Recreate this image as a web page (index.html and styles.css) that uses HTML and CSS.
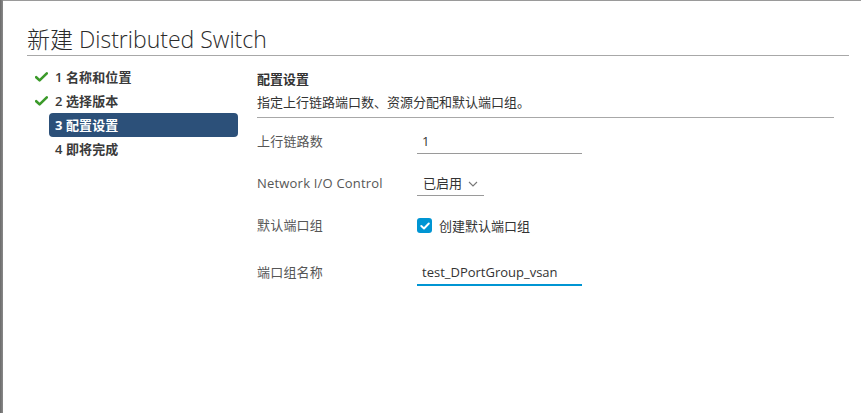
FILE: index.html
```html
<!DOCTYPE html>
<html lang="zh-CN">
<head>
<meta charset="utf-8">
<title>新建 Distributed Switch</title>
<link rel="stylesheet" href="styles.css">
</head>
<body>
<div class="page">
  <div class="backdrop-strip"></div>
  <div class="modal">
    <header class="modal-header">
      <h1 class="modal-title">新建 Distributed Switch</h1>
    </header>
    <div class="modal-body">
      <nav class="steps">
        <div class="step done">
          <span class="step-icon">
            <svg width="13" height="10" viewBox="0 0 13 10"><path d="M1.2 5.2 L4.6 8.4 L11.8 1.4" fill="none" stroke="#3b9a2a" stroke-width="2.6" stroke-linecap="round" stroke-linejoin="round"/></svg>
          </span>
          <span class="step-label">1 名称和位置</span>
        </div>
        <div class="step done">
          <span class="step-icon">
            <svg width="13" height="10" viewBox="0 0 13 10"><path d="M1.2 5.2 L4.6 8.4 L11.8 1.4" fill="none" stroke="#3b9a2a" stroke-width="2.6" stroke-linecap="round" stroke-linejoin="round"/></svg>
          </span>
          <span class="step-label">2 选择版本</span>
        </div>
        <div class="step active">
          <span class="step-icon"></span>
          <span class="step-label">3 配置设置</span>
        </div>
        <div class="step">
          <span class="step-icon"></span>
          <span class="step-label">4 即将完成</span>
        </div>
      </nav>
      <section class="content">
        <div class="content-head">
          <h2 class="content-title">配置设置</h2>
          <p class="content-desc">指定上行链路端口数、资源分配和默认端口组。</p>
        </div>
        <div class="form">
          <div class="form-row">
            <span class="form-label">上行链路数</span>
            <div class="field input">1</div>
          </div>
          <div class="form-row">
            <span class="form-label">Network I/O Control</span>
            <div class="field select">
              <span>已启用</span>
              <svg class="chevron" width="10" height="6" viewBox="0 0 10 6"><path d="M1 1 L5 5 L9 1" fill="none" stroke="#777" stroke-width="1.1"/></svg>
            </div>
          </div>
          <div class="form-row">
            <span class="form-label">默认端口组</span>
            <div class="field checkbox-field">
              <span class="checkbox">
                <svg width="10" height="8" viewBox="0 0 10 8"><path d="M1.3 4 L4 6.5 L8.8 1.5" fill="none" stroke="#fff" stroke-width="1.9" stroke-linecap="round" stroke-linejoin="round"/></svg>
              </span>
              <span class="checkbox-label">创建默认端口组</span>
            </div>
          </div>
          <div class="form-row last">
            <span class="form-label">端口组名称</span>
            <div class="field input focused">test_DPortGroup_vsan</div>
          </div>
        </div>
      </section>
    </div>
  </div>
</div>
</body>
</html>
```

FILE: styles.css
```css
* { box-sizing: border-box; }

html, body {
  margin: 0;
  padding: 0;
  background: #ffffff;
}

body {
  font-family: "Open Sans", "Noto Sans CJK SC", sans-serif;
  font-size: 13px;
  color: #333333;
}

.page {
  display: flex;
  width: 861px;
  height: 413px;
  overflow: hidden;
}

.backdrop-strip {
  width: 3px;
  flex: none;
  background: linear-gradient(to right, #6b6b6b, #8a8a8a);
}

.modal {
  flex: 1;
  background: #ffffff;
  border-top: 1px solid #9a9a9a;
  padding: 0 12px 0 24px;
  display: flex;
  flex-direction: column;
}

.modal-header {
  border-bottom: 1px solid #a8a8a8;
  height: 55px;
  padding-top: 25px;
}

.modal-title {
  margin: 0;
  font-family: "Open Sans", "Noto Sans CJK SC", sans-serif;
  font-weight: 300;
  font-size: 23px;
  line-height: 26px;
  color: #2b2b2b;
}

.modal-body {
  display: flex;
  gap: 19px;
  padding-right: 15px;
}

.steps {
  width: 211px;
  flex: none;
  padding-top: 9px;
  display: flex;
  flex-direction: column;
}

.step {
  display: flex;
  align-items: center;
  height: 24px;
}

.step-icon {
  width: 22px;
  flex: none;
  display: flex;
  align-items: center;
  padding-left: 8px;
}

.step-label {
  flex: 1;
  height: 24px;
  line-height: 24px;
  padding: 0 6px;
  border-radius: 4px;
  font-weight: 600;
  color: #3a3a3a;
  letter-spacing: 0.1px;
}

.step.active .step-label {
  background: #2c5079;
  color: #ffffff;
  font-weight: 700;
}

.content {
  flex: 1;
  padding-top: 13px;
}

.content-head {
  border-bottom: 1px solid #a8a8a8;
  padding-bottom: 5px;
}

.content-title {
  margin: 0;
  font-size: 13px;
  font-weight: 600;
  line-height: 20px;
  color: #333333;
}

.content-desc {
  margin: 3px 0 0 0;
  font-size: 13px;
  line-height: 20px;
  color: #333333;
}

.form {
  display: flex;
  flex-direction: column;
  gap: 17px;
  padding-top: 11px;
}

.form-row {
  display: flex;
  align-items: flex-start;
}

.form-row.last {
  margin-top: 5px;
}

.form-label {
  width: 160px;
  flex: none;
  line-height: 24px;
  color: #565656;
  letter-spacing: 0.2px;
}

.field {
  height: 25px;
  line-height: 24px;
  color: #333333;
}

.input {
  width: 165px;
  padding-left: 5px;
  border-bottom: 1px solid #9a9a9a;
}

.input.focused {
  border-bottom: 2px solid #0095d3;
  height: 26px;
}

.select {
  width: 67px;
  padding-left: 6px;
  border-bottom: 1px solid #9a9a9a;
  display: flex;
  align-items: center;
  gap: 6px;
}

.chevron {
  margin-top: 1px;
}

.checkbox-field {
  display: flex;
  align-items: center;
  gap: 7px;
}

.checkbox {
  width: 15px;
  height: 15px;
  border-radius: 3px;
  background: #0095d3;
  display: flex;
  align-items: center;
  justify-content: center;
}
```
